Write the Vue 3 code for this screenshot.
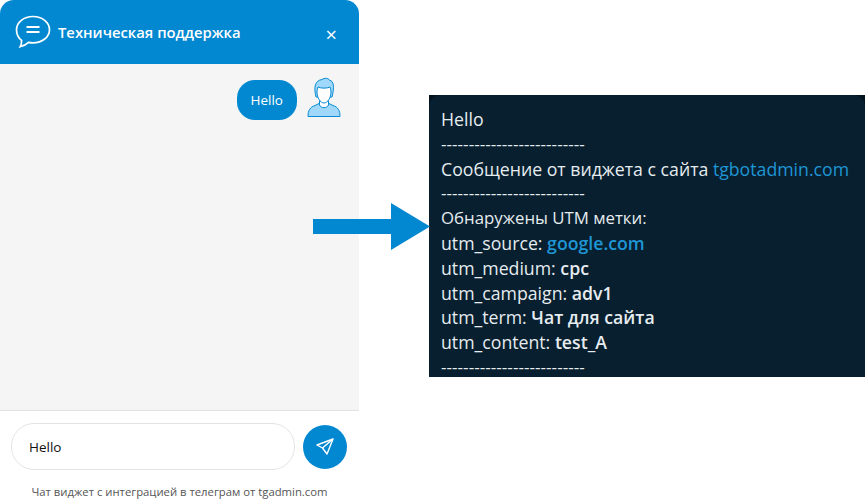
<script setup>
const utmRows = [
  { key: 'utm_source:', value: 'google.com', link: true },
  { key: 'utm_medium:', value: 'cpc' },
  { key: 'utm_campaign:', value: 'adv1' },
  { key: 'utm_term:', value: 'Чат для сайта' },
  { key: 'utm_content:', value: 'test_A' }
]
const divider = '--------------------------'
</script>

<template>
  <div class="page">
    <section class="widget">
      <header class="widget-head">
        <svg class="chat-icon" width="36" height="34" viewBox="0 0 36 34" fill="none" stroke="#fff" stroke-width="1.7">
          <path d="M18 1.500c9.200 0 16.500 5.900 16.500 13.200S27.200 27.900 18 27.900c-1.500 0-3-.2-4.400-.5-2.100 2-5 3.500-8.400 4.300 1-1.800 1.500-3.700 1.400-6.300C3.500 23 1.500 19.100 1.500 14.700 1.500 7.400 8.800 1.500 18 1.500z" />
          <path d="M11.500 12h13M11.500 17h13" stroke-width="2" />
        </svg>
        <span class="widget-title">Техническая поддержка</span>
        <span class="close">×</span>
      </header>

      <div class="messages">
        <div class="bubble">Hello</div>
        <svg class="avatar" width="34" height="40" viewBox="0 0 34 40" stroke="#0a8ad0" stroke-width="1">
          <path d="M1 39.500c0-6 2-9.500 7-11l5-2.500h8l5 2.500c5 1.500 7 5 7 11z" fill="#9fd8fb" />
          <path d="M12.500 24v4c1.500 3.500 7.500 3.500 9 0v-4z" fill="#fff" />
          <path d="M9 20C6.500 10 8 3.500 15 2.500c2.500-1.800 6.500-1.500 7.500.7 4.500.8 5 7 2.500 16.800z" fill="#9fd8fb" />
          <path d="M10 15c0-2 .5-3.500 1-5 3 1.500 9 1.500 12 0 .5 1.500 1 3 1 5 0 6-3.500 11-7 11s-7-5-7-11z" fill="#fff" />
        </svg>
      </div>

      <div class="composer">
        <div class="field">Hello</div>
        <button class="send" type="button">
          <svg width="18" height="18" viewBox="0 0 18 18" fill="none" stroke="#fff" stroke-width="1.400" stroke-linejoin="round">
            <path d="M17 1 1 7l5.500 3L11 16z" />
            <path d="M17 1 6.500 10" />
          </svg>
        </button>
      </div>
      <div class="credit">Чат виджет с интеграцией в телеграм от tgadmin.com</div>
    </section>

    <div class="telegram-frame">
      <article class="telegram">
        <p>Hello</p>
        <p class="dash">{{ divider }}</p>
        <p>Сообщение от виджета с сайта <span class="link">tgbotadmin.com</span></p>
        <p class="dash">{{ divider }}</p>
        <p class="utm-head">Обнаружены UTM метки:</p>
        <p v-for="row in utmRows" :key="row.key">
          {{ row.key }} <b :class="{ link: row.link }">{{ row.value }}</b>
        </p>
        <p class="dash">{{ divider }}</p>
      </article>
    </div>

    <svg class="arrow" width="117" height="47" viewBox="0 0 117 47">
      <path d="M0 16h78V0l39 23.500L78 47V31H0z" fill="#0288d1" />
    </svg>
  </div>
</template>

<style>
html,
body {
  margin: 0;
  background: #fff;
}
</style>

<style scoped>
* {
  box-sizing: border-box;
}

.page {
  position: relative;
  display: flex;
  align-items: flex-start;
  width: 865px;
  height: 500px;
  overflow: hidden;
  font-family: "Open Sans", "Noto Sans", sans-serif;
}

.widget {
  display: flex;
  flex-direction: column;
  flex: none;
  width: 359px;
  height: 500px;
  border-radius: 14px 14px 10px 10px;
  overflow: hidden;
  background: #fff;
}

.widget-head {
  display: flex;
  align-items: center;
  height: 64px;
  padding: 0 22px 0 15px;
  background: #0288d1;
  color: #fff;
}

.chat-icon {
  margin-right: 7px;
}

.widget-title {
  flex: 1;
  font-size: 14.800px;
  font-weight: 600;
}

.close {
  font-size: 20px;
  line-height: 20px;
  margin-top: 5px;
}

.messages {
  flex: 1;
  display: flex;
  justify-content: flex-end;
  align-items: flex-start;
  gap: 10px;
  padding: 16px 18px 0 0;
  background: #f5f5f5;
  border-bottom: 1px solid #e3e3e3;
}

.bubble {
  height: 40px;
  padding: 0 14px;
  border-radius: 18px;
  background: #0288d1;
  color: #fff;
  font-size: 13.500px;
  line-height: 40px;
}

.avatar {
  margin-top: -3px;
}

.composer {
  display: flex;
  align-items: center;
  gap: 8px;
  padding: 12px 12px 0 11px;
}

.field {
  flex: 1;
  height: 47px;
  padding-left: 17px;
  border: 1px solid #e3e3e3;
  border-radius: 23px;
  color: #111;
  font-size: 13.500px;
  line-height: 46px;
}

.send {
  display: flex;
  align-items: center;
  justify-content: center;
  width: 44px;
  height: 44px;
  padding: 0;
  border: 0;
  border-radius: 50%;
  background: #0288d1;
}

.credit {
  margin-top: 14px;
  color: #555;
  font-size: 11.300px;
  line-height: 16px;
  text-align: center;
}

.telegram-frame {
  flex: none;
  width: 436px;
  height: 282px;
  margin: 95px 0 0 70px;
  overflow: hidden;
  background: #04141f;
}

.telegram {
  height: 100%;
  padding: 12px 0 0 12px;
  overflow: hidden;
  border-radius: 12px 12px 0 0;
  background: #071f2e;
  color: #e6ecf0;
  font-size: 17.700px;
  line-height: 24.800px;
}

.telegram p {
  margin: 0;
  white-space: nowrap;
}

.telegram .dash {
  font-size: 17.200px;
}

.telegram .utm-head {
  font-size: 16.800px;
}

.telegram b {
  font-weight: 600;
}

.link {
  color: #1f96d6;
}

.arrow {
  position: absolute;
  left: 313px;
  top: 203px;
}
</style>
